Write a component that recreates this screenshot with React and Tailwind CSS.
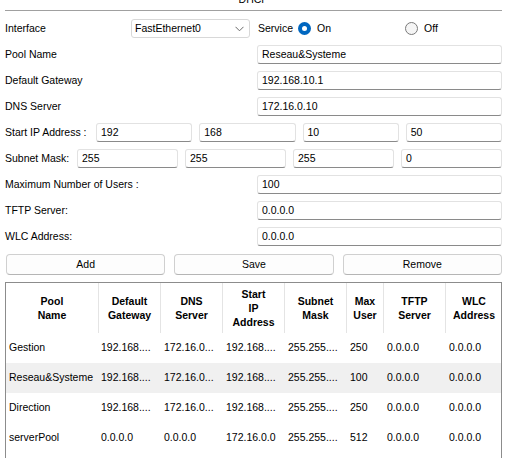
import React from "react";

const pools = [
    { name: "Gestion", gw: "192.168....", dns: "172.16.0...", start: "192.168....", mask: "255.255....", max: "250", tftp: "0.0.0.0", wlc: "0.0.0.0" },
    { name: "Reseau&Systeme", gw: "192.168....", dns: "172.16.0...", start: "192.168....", mask: "255.255....", max: "100", tftp: "0.0.0.0", wlc: "0.0.0.0" },
    { name: "Direction", gw: "192.168....", dns: "172.16.0...", start: "192.168....", mask: "255.255....", max: "250", tftp: "0.0.0.0", wlc: "0.0.0.0" },
    { name: "serverPool", gw: "0.0.0.0", dns: "0.0.0.0", start: "172.16.0.0", mask: "255.255....", max: "512", tftp: "0.0.0.0", wlc: "0.0.0.0" },
];

const headers = [
    ["Pool", "Name"],
    ["Default", "Gateway"],
    ["DNS", "Server"],
    ["Start", "IP", "Address"],
    ["Subnet", "Mask"],
    ["Max", "User"],
    ["TFTP", "Server"],
    ["WLC", "Address"],
];

const Field = ({ value }) => (
    <div className="h-[19px] flex items-center pl-[4px] bg-white border border-[#e2e2e2] border-b-[#8a8a8a] rounded-[3px] text-[10.5px] text-black">
        {value}
    </div>
);

const Row = ({ label, value }) => (
    <div className="flex items-center h-[19px]">
        <div className="w-[252px] text-[10.5px]">{label}</div>
        <div className="flex-1">
            <Field value={value} />
        </div>
    </div>
);

const App = () => {
    return (
        <div className="w-[507px] h-[458px] overflow-hidden bg-white text-black font-['Liberation_Sans',Arial,sans-serif]">
            <div className="h-[10px] overflow-hidden flex justify-center">
                <span className="text-[10.5px] leading-[12px] mt-[-7px]">DHCP</span>
            </div>
            <div className="h-px bg-[#a0a0a0] mx-[5px]"></div>

            <div className="flex flex-col gap-[7px] px-[5px] pt-[8px]">
                <div className="flex items-center h-[19px] text-[10.5px]">
                    <div className="w-[126px]">Interface</div>
                    <div className="w-[119px] h-[19px] flex items-center justify-between pl-[3px] pr-[5px] border border-[#d8d8d8] rounded-[3px] bg-white">
                        <span>FastEthernet0</span>
                        <svg width="9" height="6" viewBox="0 0 9 6">
                            <polyline points="0.5,0.8 4.5,4.8 8.5,0.8" fill="none" stroke="#6a6a6a" strokeWidth="1" />
                        </svg>
                    </div>
                    <div className="ml-[8px] w-[147px] flex items-center">
                        <span>Service</span>
                        <span className="ml-[5px] w-[13px] h-[13px] rounded-full bg-[#0067c0] flex items-center justify-center">
                            <span className="w-[5px] h-[5px] rounded-full bg-white"></span>
                        </span>
                        <span className="ml-[6px]">On</span>
                    </div>
                    <div className="flex items-center">
                        <span className="w-[13px] h-[13px] rounded-full border border-[#7a7a7a] bg-[#f5f5f5]"></span>
                        <span className="ml-[6px]">Off</span>
                    </div>
                </div>

                <Row label="Pool Name" value="Reseau&Systeme" />
                <Row label="Default Gateway" value="192.168.10.1" />
                <Row label="DNS Server" value="172.16.0.10" />

                <div className="flex items-center h-[19px]">
                    <div className="w-[91px] text-[10.5px]">Start IP Address :</div>
                    <div className="flex-1 grid grid-cols-4 gap-[7px]">
                        <Field value="192" />
                        <Field value="168" />
                        <Field value="10" />
                        <Field value="50" />
                    </div>
                </div>

                <div className="flex items-center h-[19px]">
                    <div className="w-[72px] text-[10.5px]">Subnet Mask:</div>
                    <div className="flex-1 grid grid-cols-4 gap-[7px]">
                        <Field value="255" />
                        <Field value="255" />
                        <Field value="255" />
                        <Field value="0" />
                    </div>
                </div>

                <Row label="Maximum Number of Users :" value="100" />
                <Row label="TFTP Server:" value="0.0.0.0" />
                <Row label="WLC Address:" value="0.0.0.0" />

                <div className="grid grid-cols-3 gap-[9px] pl-[1px] mt-[1px]">
                    {["Add", "Save", "Remove"].map((b) => (
                        <button key={b} className="h-[21px] bg-[#fdfdfd] border border-[#d0d0d0] border-b-[#b5b5b5] rounded-[4px] text-[10.5px] text-black">
                            {b}
                        </button>
                    ))}
                </div>
            </div>

            <div className="mx-[5px] mt-[7px] h-[220px] border border-[#8c8c8c] bg-white">
                <div className="grid grid-cols-[93px_62px_62px_62px_62px_37px_62px_56px]">
                    {headers.map((h, i) => (
                        <div key={i} className={"h-[50px] flex items-center justify-center text-center font-bold text-[10.5px] leading-[14px] " + (i < 7 ? "border-r border-[#e4e4e4]" : "")}>
                            <div>
                                {h.map((line, j) => (
                                    <div key={j}>{line}</div>
                                ))}
                            </div>
                        </div>
                    ))}
                </div>
                {pools.map((p, i) => (
                    <div key={p.name} className={"grid grid-cols-[93px_62px_62px_62px_62px_37px_62px_56px] h-[30px] items-center text-[10.5px] whitespace-nowrap " + (i === 1 ? "bg-[#f0f0f0]" : "")}>
                        <div className="pl-[3px]">{p.name}</div>
                        <div className="pl-[2px]">{p.gw}</div>
                        <div className="pl-[3px]">{p.dns}</div>
                        <div className="pl-[3px]">{p.start}</div>
                        <div className="pl-[3px]">{p.mask}</div>
                        <div className="pl-[3px]">{p.max}</div>
                        <div className="pl-[3px]">{p.tftp}</div>
                        <div className="pl-[3px]">{p.wlc}</div>
                    </div>
                ))}
            </div>
        </div>
    );
};

export default App;
